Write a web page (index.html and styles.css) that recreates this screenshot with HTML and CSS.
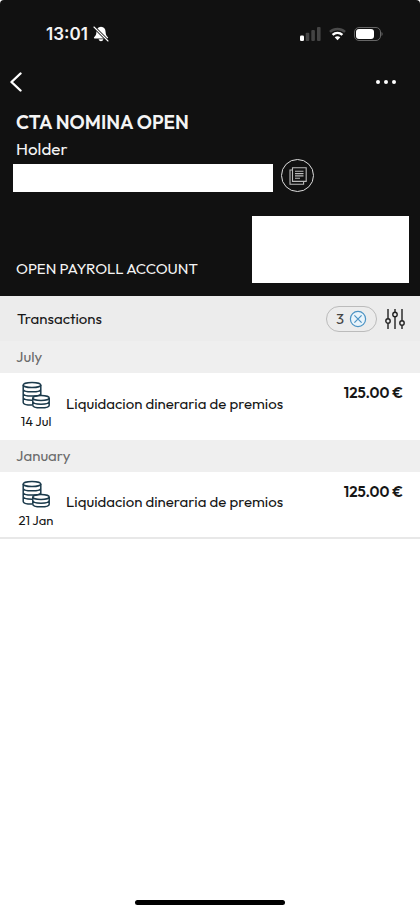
FILE: index.html
```html
<!DOCTYPE html>
<html lang="en">
<head>
<meta charset="utf-8">
<meta name="viewport" content="width=device-width, initial-scale=1">
<title>Account transactions</title>
<link rel="stylesheet" href="styles.css">
</head>
<body>
<svg class="defs" width="0" height="0" aria-hidden="true">
  <symbol id="coins" viewBox="0 0 28 28">
    <g fill="none" stroke="#1b3a4b" stroke-width="1.500">
      <ellipse cx="10" cy="4" rx="8.800" ry="2.600"/>
      <path d="M1.200 4v17.500c0 1.500 3.900 2.600 8.800 2.600M18.800 4v10.500M1.200 8.200c0 1.500 3.900 2.600 8.800 2.600s8.800-1.100 8.800-2.600M1.200 12.400c0 1.500 3.900 2.600 8.800 2.600s8.800-1.100 8.800-2.600M1.200 16.600c0 1.500 3.900 2.600 8.800 2.600"/>
      <ellipse cx="19" cy="17" rx="8.200" ry="2.500"/>
      <path d="M10.800 17v7.200c0 1.500 3.700 2.600 8.200 2.600s8.200-1.100 8.200-2.600V17M10.800 20.600c0 1.500 3.700 2.600 8.200 2.600s8.200-1.100 8.200-2.600"/>
    </g>
  </symbol>
</svg>
<div class="screen">
  <header class="hero">
    <div class="status">
      <div class="clock">
        <span>13:01</span>
        <svg width="16" height="16" viewBox="0 0 16 16" aria-hidden="true">
          <path d="M8 .8C5 .8 3.500 3 3.400 6c-.1 3-1 4-2.300 5.200-.5.600-.2 1.200.5 1.200h12.800c.7 0 1-.6.500-1.200C13.600 10 12.700 9 12.600 6 12.500 3 11 .8 8 .8z" fill="#fff"/>
          <path d="M5.600 13.300h4.800C10 14.500 9.200 15.200 8 15.200s-2-.7-2.400-1.900z" fill="#fff"/>
          <path d="M1 1l14 14" stroke="#111" stroke-width="2.800"/>
          <path d="M1 1l14 14" stroke="#fff" stroke-width="1.100" stroke-linecap="round"/>
        </svg>
      </div>
      <div class="signals">
        <svg width="21" height="14" viewBox="0 0 21 14" aria-hidden="true">
          <rect x="0" y="8.500" width="4" height="5.500" rx="1.300" fill="#fff"/>
          <g fill="#444"><rect x="5.700" y="5.700" width="3.600" height="8.300" rx="1"/><rect x="11.300" y="3" width="3.600" height="11" rx="1"/><rect x="17" y="0" width="3.600" height="14" rx="1"/></g>
        </svg>
        <svg width="17" height="14" viewBox="0 0 18 14" aria-hidden="true">
          <g fill="none" stroke-width="2.600">
            <path d="M1 4.800c4.600-4.200 11.400-4.200 16 0" stroke="#4a4a4a"/>
            <path d="M3.800 8c3-2.800 7.400-2.800 10.400 0" stroke="#fff"/>
          </g>
          <path d="M9 13.500l-3-3.100c1.700-1.500 4.300-1.500 6 0z" fill="#fff"/>
        </svg>
        <svg width="29" height="14" viewBox="0 0 29 14" aria-hidden="true">
          <rect x=".5" y=".5" width="26" height="13" rx="4.500" fill="none" stroke="#666"/>
          <rect x="2" y="2" width="18" height="10" rx="3" fill="#fff"/>
          <path d="M27.500 5c1.500.6 1.500 3.400 0 4z" fill="#666"/>
        </svg>
      </div>
    </div>
    <nav class="nav">
      <button type="button" aria-label="Back">
        <svg width="12" height="20" viewBox="0 0 12 20"><path d="M10.500 1.500L1.500 10l9 8.500" fill="none" stroke="#fff" stroke-width="2.400" stroke-linecap="round" stroke-linejoin="round"/></svg>
      </button>
      <button type="button" aria-label="More options">
        <svg width="20" height="4" viewBox="0 0 20 4"><g fill="#fff"><circle cx="2" cy="2" r="2"/><circle cx="10" cy="2" r="2"/><circle cx="18" cy="2" r="2"/></g></svg>
      </button>
    </nav>
    <h1>CTA NOMINA OPEN</h1>
    <p class="holder">Holder</p>
    <div class="number">
      <div class="number-box"></div>
      <button type="button" class="copy" aria-label="Copy account number">
        <svg width="18" height="18" viewBox="0 0 18 18"><g fill="none" stroke="#bbb" stroke-width="1.100"><path d="M3.500.8h13.700v13.600H3.500zM3.500 3H1v14.200h13.600v-2.800"/><path d="M6 4.300h8.500M6 6.600h8.500M6 8.900h8.500M6 11.200h5"/></g></svg>
      </button>
    </div>
    <div class="summary">
      <p>OPEN PAYROLL ACCOUNT</p>
      <div class="balance-box"></div>
    </div>
  </header>
  <main>
    <div class="toolbar">
      <h2>Transactions</h2>
      <button type="button" class="chip" aria-label="Clear 3 filters">
        <span>3</span>
        <svg width="18" height="18" viewBox="0 0 18 18"><g fill="#e9f4fb" stroke="#4b93c4" stroke-width="1.200"><circle cx="9" cy="9" r="7.600"/><path d="M5.400 5.400l7.200 7.200M12.600 5.400l-7.200 7.200"/></g></svg>
      </button>
      <button type="button" class="filter" aria-label="Filter">
        <svg width="20" height="20" viewBox="0 0 20 20"><g fill="none" stroke="#222" stroke-width="1.400"><path d="M3 0v9.500M3 14.500V20M10 0v3M10 8v12M17 0v11.500M17 16.500V20"/><circle cx="3" cy="12" r="2.200"/><circle cx="10" cy="5.500" r="2.200"/><circle cx="17" cy="14" r="2.200"/></g></svg>
      </button>
    </div>
    <section>
      <h3>July</h3>
      <article class="row">
        <div class="when"><svg width="28" height="28" aria-hidden="true"><use href="#coins"/></svg><time>14 Jul</time></div>
        <p class="what">Liquidacion dineraria de premios</p>
        <strong>125.00 €</strong>
      </article>
    </section>
    <section>
      <h3>January</h3>
      <article class="row">
        <div class="when"><svg width="28" height="28" aria-hidden="true"><use href="#coins"/></svg><time>21 Jan</time></div>
        <p class="what">Liquidacion dineraria de premios</p>
        <strong>125.00 €</strong>
      </article>
    </section>
  </main>
  <div class="home"></div>
</div>
</body>
</html>
```
FILE: styles.css
```css
* { box-sizing: border-box; margin: 0; }
body { background: #fff; color: #161616; font-family: Outfit, Lato, sans-serif; font-size: 15px; line-height: 20px; }
button { border: 0; padding: 0; background: none; color: inherit; font: inherit; display: flex; align-items: center; justify-content: center; }
svg { display: block; flex: none; }
.defs { position: absolute; }
.screen { min-height: 100vh; display: flex; flex-direction: column; }
.hero { background: #111; color: #f4f4f4; border-radius: 4px 4px 0 0; padding-bottom: 13px; }
.status { height: 68px; padding: 0 37px 0 46px; display: flex; align-items: center; justify-content: space-between; }
.clock { display: flex; align-items: center; gap: 5px; font-family: Inter, sans-serif; font-size: 17px; font-weight: 600; }
.signals { display: flex; align-items: center; gap: 8px; }
.nav { height: 28px; padding: 0 24px 0 10px; display: flex; align-items: center; justify-content: space-between; }
h1 { margin-top: 13px; padding: 0 16px; font-size: 19px; line-height: 26px; font-weight: 600; }
.holder { padding: 0 16px; margin-top: 4px; font-size: 17px; line-height: 20px; }
.number { display: flex; align-items: center; gap: 8px; padding-left: 13px; }
.number-box { width: 64%; height: 28px; margin-top: 5px; background: #fff; }
.copy { width: 33px; height: 33px; border: 1px solid #ddd; border-radius: 50%; flex: none; }
.summary { display: flex; justify-content: space-between; align-items: flex-end; padding: 0 11px 0 16px; margin-top: 24px; }
.summary p { padding-bottom: 4px; }
.balance-box { width: 40%; height: 67px; background: #fff; }
.toolbar { height: 45px; display: flex; align-items: center; gap: 8px; padding: 0 15px 0 17px; background: #ececec; }
h2 { flex: 1; font-size: 15px; font-weight: 400; }
.chip { width: 51px; height: 26px; gap: 5px; border: 1px solid #bbb; border-radius: 13px; color: #444; }
h3 { height: 32px; padding: 0 16px; background: #efefef; color: #6b6b6b; font-size: 15px; line-height: 32px; font-weight: 400; }
.row { height: 67px; display: flex; padding: 8px 17px 8px 16px; }
.when { width: 40px; display: flex; flex-direction: column; align-items: center; gap: 2px; font-size: 13px; }
.when svg { margin-right: 1px; }
.what { flex: 1; align-self: center; padding-left: 10px; margin-top: -6px; }
.row strong { margin-top: 2px; font-weight: 600; }
section:last-child .row { border-bottom: 2px solid #e8e8e8; }
.home { width: 150px; height: 5px; margin: auto auto 9px; border-radius: 3px; background: #000; }
```
